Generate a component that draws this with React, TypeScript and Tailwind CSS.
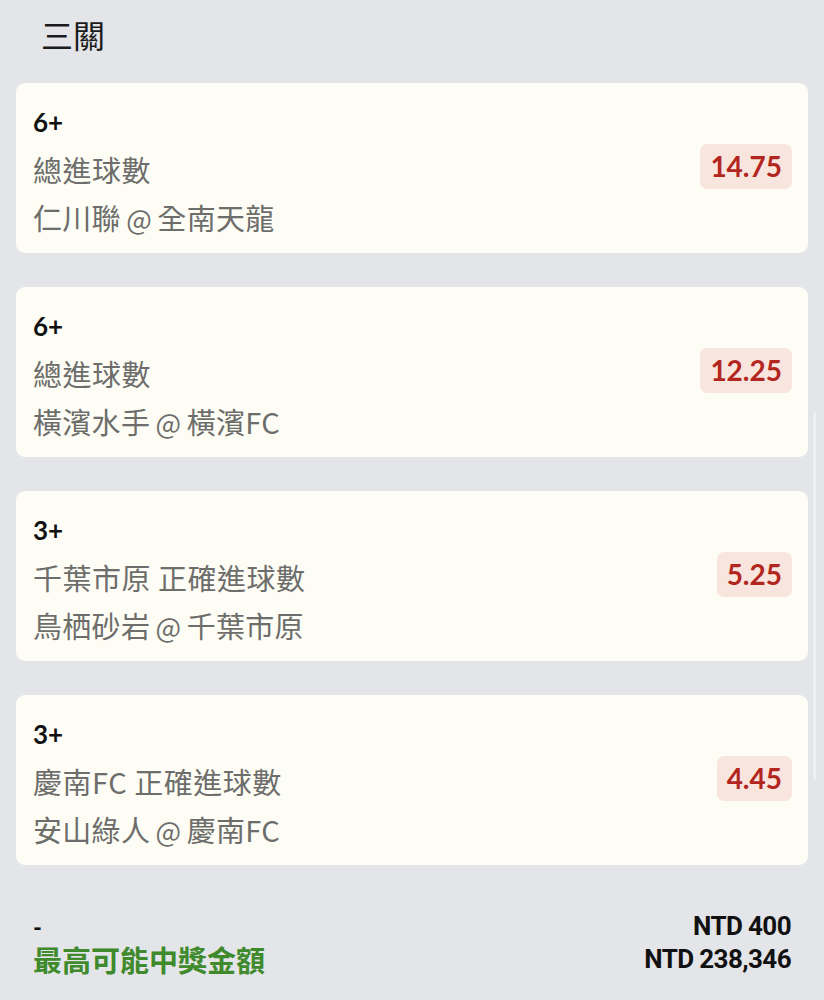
import React from 'react';

type Leg = {
  pick: string;
  market: string;
  match: string;
  odds: string;
};

const LEGS: Leg[] = [
  { pick: '6+', market: '總進球數', match: '仁川聯 @ 全南天龍', odds: '14.75' },
  { pick: '6+', market: '總進球數', match: '橫濱水手 @ 橫濱FC', odds: '12.25' },
  { pick: '3+', market: '千葉市原 正確進球數', match: '鳥栖砂岩 @ 千葉市原', odds: '5.25' },
  { pick: '3+', market: '慶南FC 正確進球數', match: '安山綠人 @ 慶南FC', odds: '4.45' },
];

const FONT = "font-['Lato','Noto_Sans_CJK_TC',sans-serif]";
const CJK = "font-['Noto_Sans_CJK_TC',sans-serif]";

// "home @ away" with a slightly tighter @
const MatchLine = ({ text }: { text: string }) => {
  const [home, away] = text.split(' @ ');
  return (
    <>
      {home} <span className="mx-[-1.5px] text-[27px]">@</span> {away}
    </>
  );
};

const LegCard = ({ leg }: { leg: Leg }) => (
  <div className="bg-[#fdfdf5] rounded-[9px] h-[170px] pl-[17px] pr-[16px] pt-[15px] pb-[11px] flex items-center justify-between">
    <div className="flex flex-col">
      <div className="h-[48px] flex items-center text-[26px] font-bold text-[#111]">{leg.pick}</div>
      <div className={`h-[48px] flex items-center text-[29px] tracking-[0.5px] text-[#6d6d6b] ${CJK}`}>{leg.market}</div>
      <div className={`h-[48px] flex items-center text-[29px] tracking-[0.3px] text-[#6d6d6b] ${CJK}`}>
        <span>
          <MatchLine text={leg.match} />
        </span>
      </div>
    </div>
    <div className="mb-[8px] rounded-[7px] bg-[#f8e6de] px-[10px] h-[45px] flex items-center text-[28px] font-bold text-[#b3261f]">
      {leg.odds}
    </div>
  </div>
);

export default function App() {
  return (
    <div className={`relative w-full min-h-[1000px] bg-[#e4e5e8] ${FONT}`}>
      {/* Title */}
      <div className={`h-[83px] pt-[16px] pl-[41px] text-[32px] leading-[37px] text-[#1b1b1b] ${CJK}`}>三關</div>

      {/* Legs */}
      <div className="mx-[16px] flex flex-col gap-[34px]">
        {LEGS.map((leg, i) => (
          <LegCard key={i} leg={leg} />
        ))}
      </div>

      {/* Summary */}
      <div className="pt-[45px] px-[33px] flex justify-between">
        <div className="flex flex-col">
          <div className="h-[33px] flex items-center text-[24px] font-bold text-[#111]">-</div>
          <div className={`h-[33px] flex items-center text-[29px] font-bold text-[#3e8a2c] ${CJK}`}>最高可能中獎金額</div>
        </div>
        <div className="flex flex-col items-end font-['Roboto',sans-serif]">
          <div className="h-[33px] flex items-center text-[26px] font-bold text-[#111] tracking-[-0.6px]">NTD 400</div>
          <div className="h-[33px] flex items-center text-[26px] font-bold text-[#111] tracking-[-0.6px]">NTD 238,346</div>
        </div>
      </div>

      {/* scroll indicator */}
      <div className="absolute left-[813px] top-[412px] w-[3px] h-[368px] rounded-full bg-[#eeeff1]" />
    </div>
  );
}
